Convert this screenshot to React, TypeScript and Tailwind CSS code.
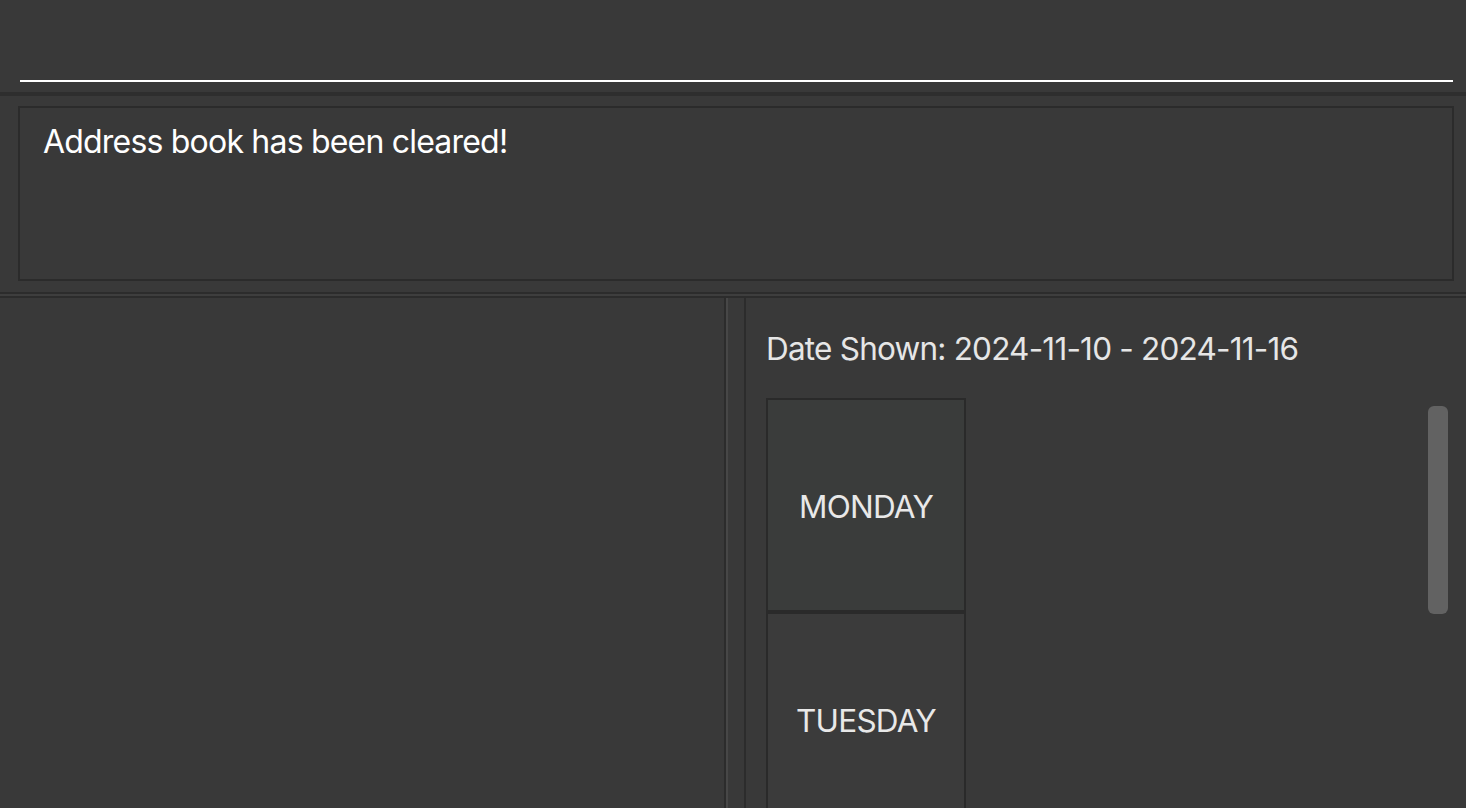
import React from "react";

const days = ["MONDAY", "TUESDAY"];

function DayCell({ name, tint }: { name: string; tint: string }) {
  return (
    <div
      className={`w-[200px] h-[214px] shrink-0 border-2 border-[#2a2a2a] flex items-center justify-center ${tint}`}
    >
      <span className="text-[31.5px] text-[#e8e8e8] tracking-tight pt-[2px]">{name}</span>
    </div>
  );
}

export default function App() {
  return (
    <div
      className="w-[1466px] h-[808px] overflow-hidden bg-[#393939] flex flex-col"
      style={{ fontFamily: "Inter, 'Noto Sans', sans-serif" }}
    >
      {/* command box */}
      <div className="h-[92px] shrink-0 px-5 pt-[80px]">
        <div className="h-[2px] bg-white mr-[-7px]" />
      </div>
      <div className="h-[4px] shrink-0 bg-[#2e2e2e]" />

      {/* result display */}
      <div className="h-[196px] shrink-0 pl-[18px] pr-[12px] pt-[10px] pb-[11px]">
        <div className="h-full border-2 border-[#2b2b2b] pl-[23px] pt-[10px]">
          <p className="text-[32px] text-white tracking-tight">Address book has been cleared!</p>
        </div>
      </div>
      <div className="h-[2px] shrink-0 bg-[#2c2c2c]" />
      <div className="h-[2px] shrink-0 bg-[#3e3e3e]" />

      {/* main panels */}
      <div className="flex-1 flex min-h-0">
        <div className="w-[728px] shrink-0 border-t-2 border-[#2c2c2c] flex">
          <div className="flex-1" />
          <div className="w-[2px] bg-[#2c2c2c]" />
          <div className="w-[2px] bg-[#474747]" />
        </div>
        <div className="w-[16px] shrink-0 border-t-2 border-[#2c2c2c]" />
        <div className="flex-1 border-t-2 border-l-2 border-[#2c2c2c] relative">
          <div className="pl-[20px] pt-[27px]">
            <p className="text-[31.5px] text-[#e6e6e6] tracking-tight">Date Shown: 2024-11-10 - 2024-11-16</p>
          </div>
          <div className="pl-[20px] pt-[26px] flex flex-col">
            <DayCell name={days[0]} tint="bg-[#3a3c3b]" />
            <DayCell name={days[1]} tint="bg-[#3b3b3b]" />
          </div>
          <div className="absolute left-[682px] top-[108px] w-[20px] h-[208px] rounded-[6px] bg-[#626262]" />
        </div>
      </div>
    </div>
  );
}
